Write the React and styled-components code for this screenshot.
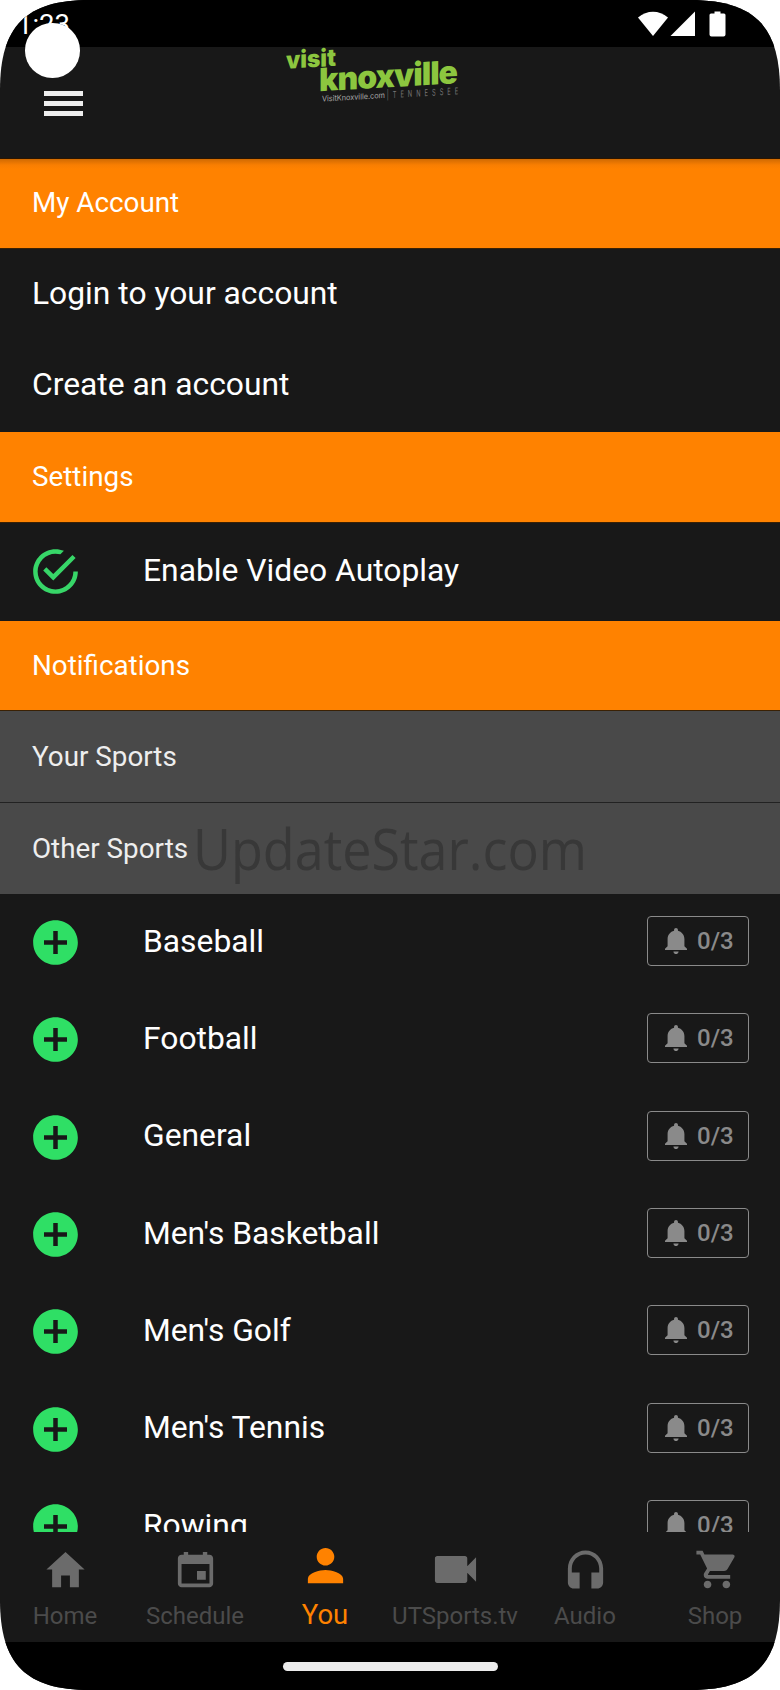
import React from 'react';
import styled, { createGlobalStyle } from 'styled-components';
import {
    IoMdHome,
    IoMdCalendar,
    IoMdPerson,
    IoMdVideocam,
    IoMdHeadset,
    IoMdCart,
    IoMdNotifications,
    IoMdAddCircle,
    IoMdCheckmarkCircleOutline,
} from 'react-icons/io';

const sports = ['Baseball', 'Football', 'General', "Men's Basketball", "Men's Golf", "Men's Tennis", 'Rowing'];

const tabs = [
    { label: 'Home', icon: IoMdHome },
    { label: 'Schedule', icon: IoMdCalendar },
    { label: 'You', icon: IoMdPerson, active: true },
    { label: 'UTSports.tv', icon: IoMdVideocam },
    { label: 'Audio', icon: IoMdHeadset },
    { label: 'Shop', icon: IoMdCart },
];

function StatusIcons() {
    return (
        <svg width='90' height='28' viewBox='0 0 90 28' fill='#fff'>
            <path d='M0 6.5 C9 -1.2 21 -1.2 30 6.5 L15 25 Z' />
            <path d='M32.5 25 L57 0.5 V25 Z' />
            <path d='M76.5 0.5 h6 v2 h3.500 q1.500 0 1.500 1.500 v19.500 q0 2 -2 2 h-12 q-2 0 -2 -2 v-19.500 q0 -1.500 1.500 -1.500 h3.500 z' />
        </svg>
    );
}

function Logo() {
    return (
        <svg width='180' height='60' viewBox='0 0 180 60' overflow='visible'>
            <g transform='skewY(-3.3)' fontFamily='Inter, sans-serif'>
                <text x='6' y='22' fontSize='24' fontWeight='900' fill='#8cc63f' textLength='50' lengthAdjust='spacingAndGlyphs'>visit</text>
                <text x='39' y='46.500' fontSize='32' fontWeight='900' letterSpacing='-1' fill='#8cc63f' textLength='138' lengthAdjust='spacingAndGlyphs'>knoxville</text>
                <text x='42' y='57' fontSize='8' fill='#a8a8a8' textLength='63' lengthAdjust='spacingAndGlyphs'>VisitKnoxville.com</text>
                <text x='178' y='57.500' transform='scale(0.6 1)' fontSize='9.500' fill='#777' textLength='119'>|TENNESSEE</text>
            </g>
        </svg>
    );
}

function SportRow({ name }) {
    return (
        <Row>
            <IoMdAddCircle />
            <RowLabel>{name}</RowLabel>
            <AlertButton>
                <IoMdNotifications />
                0/3
            </AlertButton>
        </Row>
    );
}

export default function App() {
    return (
        <>
            <GlobalStyle />
            <Phone>
                <StatusBar>
                    <Clock>1:23</Clock>
                    <StatusIcons />
                </StatusBar>
                <CameraDot />
                <Header>
                    <MenuButton aria-label='menu'>
                        <svg width='39' height='25' viewBox='0 0 39 25' fill='#eee'>
                            <rect width='39' height='5' />
                            <rect y='10' width='39' height='5' />
                            <rect y='20' width='39' height='5' />
                        </svg>
                    </MenuButton>
                    <LogoLink><Logo /></LogoLink>
                </Header>

                <Content>
                    <SectionTitle $shadow>My Account</SectionTitle>
                    <LinkItem>Login to your account</LinkItem>
                    <LinkItem>Create an account</LinkItem>
                    <SectionTitle>Settings</SectionTitle>
                    <Row $outline>
                        <IoMdCheckmarkCircleOutline />
                        <RowLabel>Enable Video Autoplay</RowLabel>
                    </Row>
                    <SectionTitle>Notifications</SectionTitle>
                    <Divider>Your Sports</Divider>
                    <Divider $last>
                        Other Sports
                        <Watermark>UpdateStar.com</Watermark>
                    </Divider>
                    {sports.map(sport => <SportRow key={sport} name={sport} />)}
                </Content>

                <TabBar>
                    {tabs.map(({ label, icon: Icon, active }) => (
                        <Tab key={label} $active={active}>
                            <Icon />
                            <span>{label}</span>
                        </Tab>
                    ))}
                </TabBar>
                <GestureBar><span /></GestureBar>
            </Phone>
        </>
    );
}


const GlobalStyle = createGlobalStyle`
    body {
        margin: 0;
        background: #fff;
    }

    * {
        box-sizing: border-box;
    }
`;

const Phone = styled.div`
    position: relative;
    display: flex;
    flex-direction: column;
    width: 780px;
    height: 1690px;
    background: #181818;
    color: #fff;
    font-family: Roboto, sans-serif;
    overflow: hidden;
    clip-path: path('M0 90 C0 26 26 0 90 0 H690 C754 0 780 26 780 90 V1600 C780 1664 754 1690 690 1690 H90 C26 1690 0 1664 0 1600 Z');
`;

const StatusBar = styled.div`
    display: flex;
    justify-content: space-between;
    align-items: flex-start;
    flex: none;
    height: 47px;
    padding: 11px 52px 0 17px;
    background: #000;
`;

const Clock = styled.span`
    font-size: 27.500px;
    line-height: 28px;
`;

const CameraDot = styled.div`
    position: absolute;
    top: 23px;
    left: 25px;
    width: 54.500px;
    height: 54.500px;
    border-radius: 50%;
    background: #fff;
`;

const Header = styled.header`
    display: flex;
    align-items: flex-start;
    flex: none;
    height: 112px;
    border-bottom: 1px solid #2a1500;
`;

const MenuButton = styled.button`
    width: 83px;
    padding: 44px 0 0 44px;
    border: 0;
    background: none;
    line-height: 0;
`;

const LogoLink = styled.div`
    margin-left: 197px;
    line-height: 0;
`;

const Content = styled.main`
    flex: 1;
    min-height: 0;
    overflow: hidden;
`;

const SectionTitle = styled.h2`
    display: flex;
    align-items: center;
    height: ${({ $shadow }) => $shadow ? '90px' : '90.500px'};
    margin: 0;
    padding: 0 32px ${({ $shadow }) => $shadow ? '2px' : '0'};
    border-bottom: 1px solid #3a2104;
    background: ${({ $shadow }) => $shadow ? 'linear-gradient(#d06a02, #f87e02 6px, #ff8200 10px)' : '#ff8200'};
    font-size: 27.800px;
    font-weight: 400;
`;

const LinkItem = styled.div`
    display: flex;
    align-items: center;
    height: 91.500px;
    padding: 0 32px 4px;
    font-size: 31.800px;
`;

const Row = styled.div`
    display: flex;
    align-items: center;
    height: ${({ $outline }) => $outline ? '98px' : '97.330px'};
    padding: 0 31px 0 28px;

    > svg {
        flex: none;
        width: 55px;
        height: 55px;
        color: ${({ $outline }) => $outline ? '#37d668' : '#2fdf65'};
    }
`;

const RowLabel = styled.span`
    flex: 1;
    margin-left: 60px;
    padding-bottom: 4px;
    font-size: 31.800px;
`;

const AlertButton = styled.div`
    display: flex;
    align-items: center;
    width: 102px;
    height: 50px;
    margin-bottom: 3px;
    padding-left: 12px;
    border: 1.500px solid #8a8a8a;
    border-radius: 4px;
    color: #8a8a8a;
    font-size: 24px;
    font-weight: 500;

    svg {
        width: 32px;
        height: 32px;
        margin-right: 5px;
    }
`;

const Divider = styled.h3`
    position: relative;
    display: flex;
    align-items: center;
    height: ${({ $last }) => $last ? '91px' : '92px'};
    margin: 0;
    padding: 0 32px;
    border-bottom: ${({ $last }) => $last ? '0' : '1px solid #222'};
    background: #494949;
    color: #eee;
    font-size: 27.800px;
    font-weight: 400;
`;

const Watermark = styled.span`
    position: absolute;
    top: 5px;
    left: 193px;
    color: #383838;
    font-family: 'Open Sans', sans-serif;
    font-size: 56px;
    line-height: 80px;
    transform: scaleX(0.93);
    transform-origin: left;
`;

const TabBar = styled.nav`
    display: grid;
    grid-template-columns: repeat(6, 130px);
    flex: none;
    height: 110px;
`;

const Tab = styled.div`
    display: flex;
    flex-direction: column;
    align-items: center;
    justify-content: flex-end;
    padding-bottom: ${({ $active }) => $active ? '13px' : '12px'};
    color: ${({ $active }) => $active ? '#ff8200' : '#4b4b4b'};
    font-size: ${({ $active }) => $active ? '27.500px' : '24px'};

    svg {
        width: 47px;
        height: 47px;
        margin-bottom: ${({ $active }) => $active ? '12px' : '9px'};
        color: ${({ $active }) => $active ? '#ff8200' : '#6b6b6b'};
    }

    span {
        line-height: 28px;
    }
`;

const GestureBar = styled.div`
    display: flex;
    justify-content: center;
    flex: none;
    height: 48px;
    padding-top: 20px;
    background: #000;

    span {
        width: 215px;
        height: 8.500px;
        border-radius: 5px;
        background: #ececec;
    }
`;
